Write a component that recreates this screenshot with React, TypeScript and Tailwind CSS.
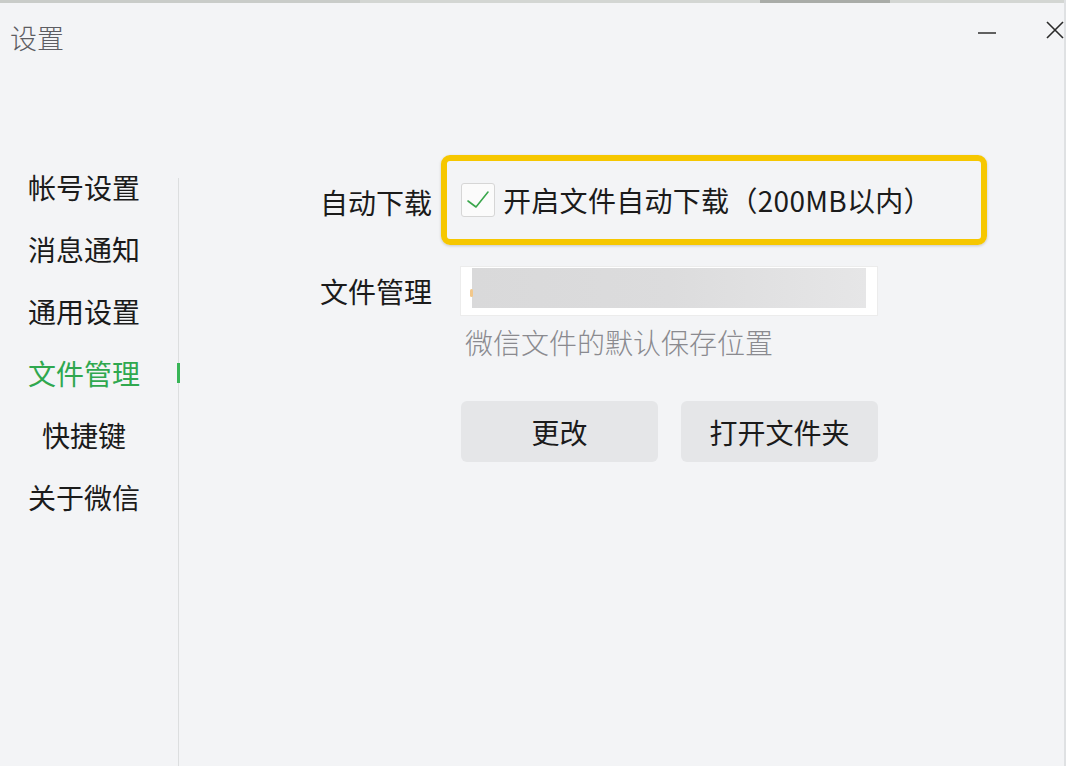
const navItems = ['帐号设置', '消息通知', '通用设置', '文件管理', '快捷键', '关于微信'];
const active = '文件管理';

function MinimizeIcon() {
  return (
    <svg width="18" height="18" viewBox="0 0 18 18" fill="none">
      <line x1="0" y1="9" x2="18" y2="9" stroke="#3a3a3a" strokeWidth="1.6" />
    </svg>
  );
}

function CloseIcon() {
  return (
    <svg width="18" height="18" viewBox="0 0 18 18" fill="none">
      <path d="M1 1L17 17M17 1L1 17" stroke="#2a2a2a" strokeWidth="1.6" />
    </svg>
  );
}

function Checkbox() {
  return (
    <div className="w-[34px] h-[34px] shrink-0 rounded-[3px] border border-[#d6d6d6] bg-[#fbfbfb]">
      <svg width="32" height="32" viewBox="0 0 32 32" fill="none">
        <path d="M6 17L14 23L26 8" stroke="#3aa64c" strokeWidth="1.6" strokeLinecap="round" strokeLinejoin="round" />
      </svg>
    </div>
  );
}

export default function App() {
  return (
    <div
      className="w-[1066px] h-[766px] bg-[#f3f4f6] flex flex-col overflow-hidden border-r-2 border-[#dfe1e3] text-[#1b1b1b]"
      style={{ fontFamily: '"Noto Sans CJK SC", "Noto Sans", sans-serif' }}
    >
      {/* top strip */}
      <div className="h-[3px] shrink-0 flex">
        <div className="w-[360px] bg-[#c9ccc9]" />
        <div className="w-[400px] bg-[#d3d6d3]" />
        <div className="w-[130px] bg-[#a9aca8]" />
        <div className="flex-1 bg-[#d3d6d3]" />
      </div>

      {/* header */}
      <div className="h-[153px] shrink-0 flex items-start justify-between">
        <div className="pl-[10px] pt-[17px] text-[27px] leading-[36px] text-[#5d5d62] font-light">设置</div>
        <div className="flex items-start pt-[18px] pr-0">
          <div className="mt-[3px]">
            <MinimizeIcon />
          </div>
          <div className="ml-[50px]">
            <CloseIcon />
          </div>
        </div>
      </div>

      {/* body */}
      <div className="flex flex-1 min-h-0">
        <nav className="w-[178px] shrink-0 flex flex-col">
          {navItems.map((item) => (
            <div key={item} className="relative h-[62px] flex items-center">
              <span
                className={
                  'ml-[28px] w-[112px] text-center text-[28px] leading-[36px] ' +
                  (item === active ? 'text-[#2fa84f]' : 'text-[#1b1b1b]')
                }
              >
                {item}
              </span>
              {item === active && (
                <div className="absolute right-[-2px] top-[21px] w-[3px] h-[20px] bg-[#38b557]" />
              )}
            </div>
          ))}
        </nav>
        <div className="w-px shrink-0 mt-[22px] bg-[#dcdedf]" />

        <main className="flex-1 pl-[141px] flex flex-col">
          {/* auto download row */}
          <div className="flex items-center h-[90px] -mt-px">
            <div className="w-[112px] text-[28px] leading-[36px] mt-[3px]">自动下载</div>
            <div className="ml-[9px] w-[546px] h-[90px] rounded-[9px] border-[6px] border-[#f6c700] shadow-[0_1px_3px_rgba(0,0,0,0.18)] flex items-center pl-[14px]">
              <Checkbox />
              <span className="ml-[8px] text-[28px] leading-[36px] tracking-[0.3px]">开启文件自动下载（200MB以内）</span>
            </div>
          </div>

          {/* file management row */}
          <div className="flex items-center mt-[21px]">
            <div className="w-[112px] text-[28px] leading-[36px]">文件管理</div>
            <div className="ml-[28px] w-[418px] h-[50px] bg-white border border-[#ececec] relative">
              <div className="absolute left-[9px] top-[22px] w-[3px] h-[8px] rounded-full bg-[#f2c78a]" />
              <div className="ml-[11px] mt-px w-[394px] h-[40px] bg-gradient-to-r from-[#d9d9da] via-[#dcdcdd] to-[#e6e6e7]" />
            </div>
          </div>

          <div className="ml-[145px] mt-[8px] text-[28px] leading-[36px] text-[#8a8a8f] font-light">
            微信文件的默认保存位置
          </div>

          <div className="ml-[141px] mt-[41px] flex gap-[23px]">
            <button className="w-[197px] h-[61px] rounded-[6px] bg-[#e5e6e8] text-[28px] leading-[36px] text-[#1b1b1b]">
              更改
            </button>
            <button className="w-[197px] h-[61px] rounded-[6px] bg-[#e5e6e8] text-[28px] leading-[36px] text-[#1b1b1b]">
              打开文件夹
            </button>
          </div>
        </main>
      </div>
    </div>
  );
}
